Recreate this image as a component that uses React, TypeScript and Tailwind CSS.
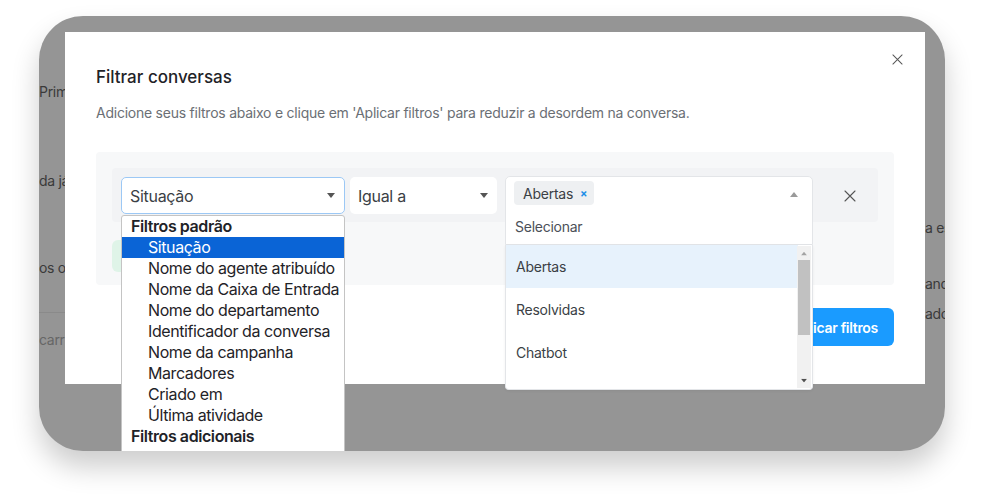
import React from "react";

const defaultFilters = [
  "Situação",
  "Nome do agente atribuído",
  "Nome da Caixa de Entrada",
  "Nome do departamento",
  "Identificador da conversa",
  "Nome da campanha",
  "Marcadores",
  "Criado em",
  "Última atividade",
];

const statusOptions = ["Abertas", "Resolvidas", "Chatbot"];

function Caret({ up = false, className = "" }: { up?: boolean; className?: string }) {
  return (
    <svg width="8" height="5" viewBox="0 0 8 5" className={className}>
      {up ? <path d="M0 5 L4 0 L8 5 Z" fill="currentColor" /> : <path d="M0 0 L8 0 L4 5 Z" fill="currentColor" />}
    </svg>
  );
}

function CloseIcon({ size = 12 }: { size?: number }) {
  return (
    <svg width={size} height={size} viewBox="0 0 12 12" fill="none">
      <path d="M1 1 L11 11 M11 1 L1 11" stroke="currentColor" strokeWidth="1.1" strokeLinecap="round" />
    </svg>
  );
}

export default function App() {
  return (
    <div className="w-[989px] h-[497px] bg-white font-['Inter',sans-serif] overflow-hidden">
      <div className="pt-[16px] pl-[39px]">
        {/* dimmed page with the dialog on top */}
        <div className="relative w-[906px] h-[435px] rounded-[44px] bg-[#959595] overflow-hidden shadow-[0_16px_28px_rgba(0,0,0,0.2)]">
          {/* page content behind the overlay */}
          <div className="flex justify-between h-full">
            <div className="w-[26px] overflow-hidden text-[14px] tracking-[-0.3px] text-[#3a3a3a] whitespace-nowrap">
              <div className="mt-[66px] leading-[20px]">Prim</div>
              <div className="mt-[69px] leading-[20px]">da já</div>
              <div className="mt-[67px] leading-[20px]">os o</div>
              <div className="mt-[34px] h-px bg-[#8a8a8a] w-full" />
              <div className="mt-[17px] leading-[20px] text-[#666]">carr</div>
            </div>
            <div className="w-[20px] overflow-hidden text-[14px] tracking-[-0.3px] text-[#3a3a3a] whitespace-nowrap">
              <div className="mt-[202px] leading-[20px]">a es</div>
              <div className="mt-[36px] leading-[20px]">and</div>
              <div className="mt-[10px] leading-[20px]">ado</div>
            </div>
          </div>

          {/* dialog */}
          <div className="absolute left-[26px] top-[16px] w-[860px] h-[352px] bg-white pt-[33px] px-[31px]">
            <button className="absolute right-[21px] top-[21px] text-[#555] p-[1px]">
              <CloseIcon size={11} />
            </button>
            <h2 className="text-[17px] leading-[24px] font-medium text-[#1f2328]">Filtrar conversas</h2>
            <p className="mt-[14px] text-[14px] leading-[20px] tracking-[-0.24px] text-[#6b6f75]">
              Adicione seus filtros abaixo e clique em 'Aplicar filtros' para reduzir a desordem na conversa.
            </p>

            {/* filter panel */}
            <div className="mt-[29px] w-[798px] h-[133px] bg-[#f7f8f9] rounded-[4px] pt-[16px] px-[16px]">
              <div className="flex items-start w-[766px] h-[54px] bg-[#f2f3f5] rounded-[4px] pt-[9px] pl-[9px]">
                {/* attribute select, open */}
                <div className="relative w-[224px] h-[37px]">
                  <div className="flex items-center justify-between h-full bg-white border border-[#9cc8f5] rounded-[5px] pl-[8px] pr-[9px] text-[16px] tracking-[-0.3px] text-[#3b3f45]">
                    <span>Situação</span>
                    <Caret className="text-[#555]" />
                  </div>
                  <div className="absolute left-0 top-[38px] w-[224px] h-[260px] bg-white border border-[#c4c4c4] rounded-t-[3px] z-20 text-[16px] tracking-[-0.42px] text-[#1f2328]">
                    <div className="h-[21px] leading-[21px] pl-[9px] font-semibold">Filtros padrão</div>
                    {defaultFilters.map((f, i) => (
                      <div
                        key={f}
                        className={
                          i === 0
                            ? "h-[21px] leading-[21px] pl-[26px] bg-[#0a64d6] text-white"
                            : "h-[21px] leading-[21px] pl-[26px] whitespace-nowrap"
                        }
                      >
                        {f}
                      </div>
                    ))}
                    <div className="h-[21px] leading-[21px] pl-[9px] font-semibold">Filtros adicionais</div>
                  </div>
                </div>

                {/* operator select */}
                <div className="ml-[5px] w-[147px] h-[37px] flex items-center justify-between bg-white rounded-[5px] pl-[8px] pr-[9px] text-[16px] tracking-[-0.3px] text-[#3b3f45]">
                  <span>Igual a</span>
                  <Caret className="text-[#555]" />
                </div>

                {/* values multiselect, open */}
                <div className="relative ml-[8px] w-[308px] h-[37px] -mt-[1px]">
                  <div className="absolute left-0 top-0 w-[308px] z-20 tracking-[-0.25px]">
                    <div className="h-[69px] bg-white border border-[#e3e5e8] rounded-t-[5px] pl-[8px] pr-[14px] pt-[4px]">
                      <div className="flex items-start justify-between">
                        <span className="flex items-center h-[24px] bg-[#eef0f2] rounded-[4px] pl-[9px] pr-[7px] text-[14px] text-[#3b3f45]">
                          Abertas
                          <span className="ml-[7px] text-[#1d8fe8] text-[11px] font-bold leading-none">×</span>
                        </span>
                        <Caret up className="mt-[11px] text-[#9a9a9a]" />
                      </div>
                      <div className="mt-[12px] text-[14px] leading-[20px] text-[#4b5058] pl-px">Selecionar</div>
                    </div>
                    <div className="relative h-[145px] bg-white border border-t-0 border-[#e3e5e8] rounded-b-[4px] shadow-[0_1px_3px_rgba(0,0,0,0.06)] overflow-hidden">
                      <div className="pr-[14px]">
                        {statusOptions.map((o, i) => (
                          <div
                            key={o}
                            className={
                              i === 0
                                ? "h-[43px] flex items-center pl-[10px] text-[14px] text-[#3b3f45] bg-[#e7f2fc]"
                                : "h-[43px] flex items-center pl-[10px] text-[14px] text-[#3b3f45]"
                            }
                          >
                            {o}
                          </div>
                        ))}
                      </div>
                      {/* scrollbar */}
                      <div className="absolute right-[1px] top-[1px] bottom-[1px] w-[14px] bg-[#f1f1f1] flex flex-col items-center">
                        <Caret up className="mt-[5px] text-[#a3a3a3] scale-75" />
                        <div className="mt-[4px] w-[12px] h-[75px] bg-[#c1c1c1]" />
                        <div className="flex-1" />
                        <Caret className="mb-[5px] text-[#505050] scale-75" />
                      </div>
                    </div>
                  </div>
                </div>

                <button className="ml-[21px] mt-[10px] w-[32px] h-[18px] flex items-center justify-center text-[#555]">
                  <CloseIcon size={12} />
                </button>
              </div>

              <button className="mt-[18px] h-[32px] w-[20px] rounded-[6px] bg-[#dff4e8]" />
            </div>

            <div className="flex justify-end w-[798px] mt-[23px]">
              <button className="h-[38px] px-[16px] rounded-[6px] bg-[#1a9bff] text-white text-[14px] font-semibold tracking-[-0.3px]">
                Aplicar filtros
              </button>
            </div>
          </div>
        </div>
      </div>
    </div>
  );
}
